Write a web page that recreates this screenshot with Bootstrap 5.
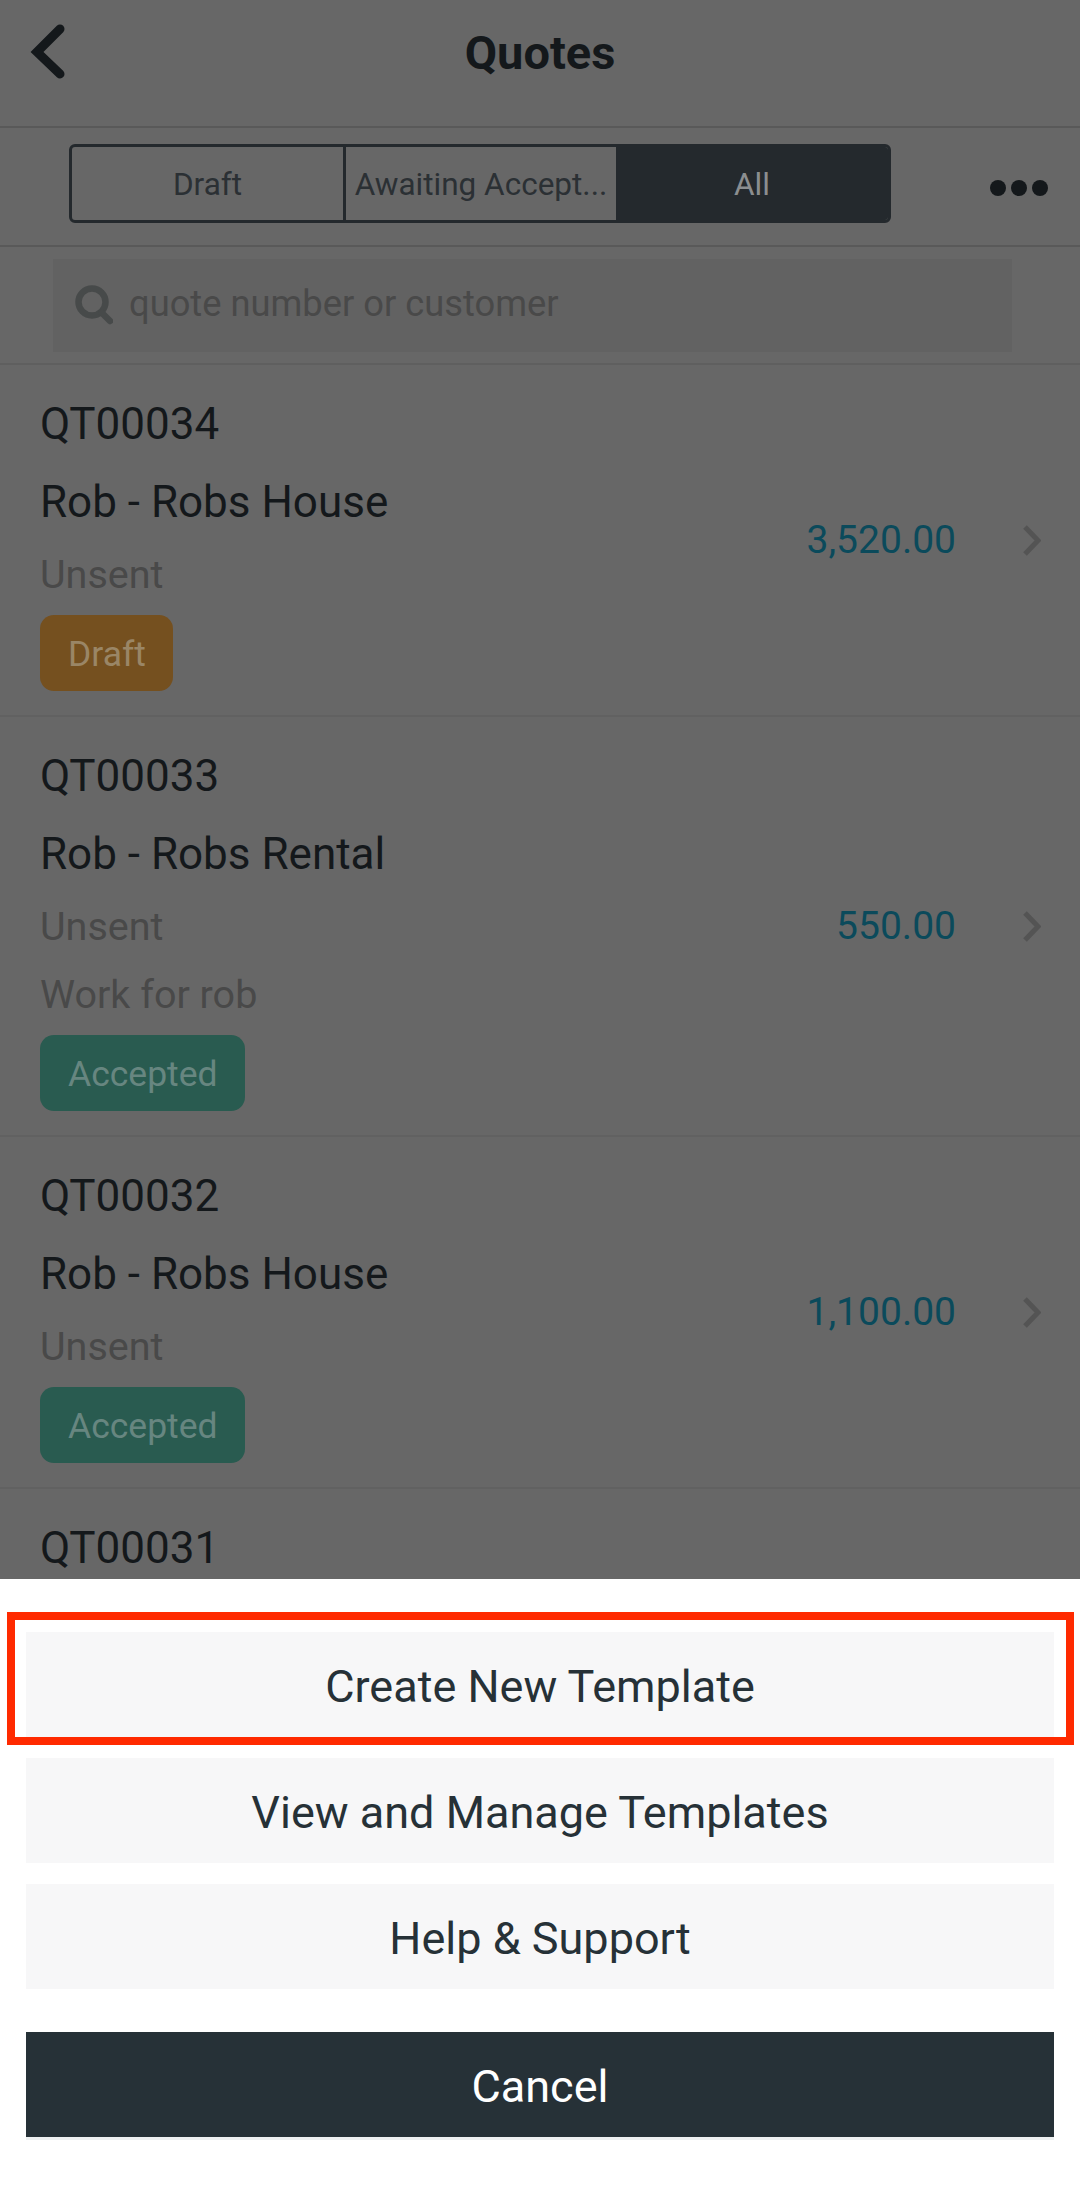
<!DOCTYPE html>
<html lang="en">
<head>
    <meta charset="UTF-8">
    <meta name="viewport" content="width=device-width, initial-scale=1.0">
    <title>Quotes</title>
    <link href="https://cdn.jsdelivr.net/npm/bootstrap@5.3.0/dist/css/bootstrap.min.css" rel="stylesheet">
    <style>
        html, body { height: 2188px; overflow: hidden; }
        body { width: 1080px; background: #676767; font-family: Roboto, "Liberation Sans", sans-serif; color: #14181b; }
        .app-page { height: 1579px; overflow: hidden; }
        .top-bar { height: 128px; padding-bottom: 22px; border-bottom: 2px solid #595959; position: relative; }
        .top-title { font-size: 47px; font-weight: 700; line-height: 1; }
        .back-link { position: absolute; left: 30px; top: 24px; line-height: 0; }
        .seg-row { height: 119px; padding: 16px 0 0 69px; border-bottom: 2px solid #595959; position: relative; }
        .seg-group { width: 822px; height: 79px; border: 3px solid #24292d; border-radius: 6px; overflow: hidden; }
        .seg-item { flex: 0 0 271px; padding-top: 2px; font-size: 31.5px; color: #2b3034; white-space: nowrap; overflow: hidden; }
        .seg-item + .seg-item { flex-basis: 273px; border-left: 3px solid #24292d; }
        .seg-item.seg-on { flex-basis: 272px; border-left: 0; background: #24292d; color: #8b8e90; }
        .more-dots { position: absolute; left: 990px; top: 51px; line-height: 0; }
        .search-row { height: 118px; padding: 12px 68px 0 53px; border-bottom: 2px solid #5f5f5f; }
        .search-box { height: 93px; background: #626262; padding: 0 0 2px 22px; font-size: 36.3px; color: #494949; }
        .quote-row { padding: 0 39px 0 40px; border-bottom: 2px solid #616161; }
        .quote-row:last-child { border-bottom: 0; }
        .quote-info { padding: 37px 0 24px; }
        .quote-num, .quote-name { font-size: 44px; line-height: 44px; color: #14181b; }
        .quote-name { margin-top: 34px; }
        .quote-state { font-size: 39.5px; line-height: 40px; color: #494949; margin-top: 31px; }
        .quote-state + .quote-state { margin-top: 28px; }
        .quote-tag { display: inline-block; font-size: 35.5px; line-height: 79px; height: 76px; padding: 0 27px 0 28px; border-radius: 14px; margin-top: 20px; vertical-align: top; }
        .tag-draft { background: #75501f; color: #9a8666; }
        .tag-accepted { background: #295b50; color: #678680; }
        .quote-amount { font-size: 39px; color: #0b4a5b; margin-right: 66px; }
        .sheet-panel { position: absolute; left: 0; top: 1579px; width: 1080px; height: 609px; background: #fff; padding: 53px 26px 0; }
        .sheet-btn { display: block; width: 100%; height: 105px; padding-top: 10px; border: 0; border-radius: 0; background: #f7f7f8; color: #263137; font-size: 45px; margin-bottom: 21px; }
        .sheet-btn:last-child { background: #263137; color: #fff; margin: 43px 0 0; box-shadow: 0 3px 0 #eef1f2; }
        .red-mark { position: absolute; left: 7px; top: 1612px; width: 1067px; height: 133px; border: 8px solid #ff2a00; }
    </style>
</head>
<body>
    <div class="app-page">
        <div class="top-bar d-flex align-items-center justify-content-center">
            <a class="back-link" href="#">
                <svg width="38" height="58" viewBox="0 0 38 58"><path d="M30 5 L7 28 L30 50" fill="none" stroke="#14181b" stroke-width="9" stroke-linecap="round" stroke-linejoin="miter"/></svg>
            </a>
            <div class="top-title">Quotes</div>
        </div>
        <div class="seg-row d-flex align-items-start">
            <div class="seg-group d-flex">
                <div class="seg-item d-flex align-items-center justify-content-center">Draft</div>
                <div class="seg-item d-flex align-items-center justify-content-center">Awaiting Accept...</div>
                <div class="seg-item seg-on d-flex align-items-center justify-content-center">All</div>
            </div>
            <div class="more-dots">
                <svg width="58" height="18" viewBox="0 0 58 18"><circle cx="8" cy="9" r="8" fill="#14181b"/><circle cx="29" cy="9" r="8" fill="#14181b"/><circle cx="50" cy="9" r="8" fill="#14181b"/></svg>
            </div>
        </div>
        <div class="search-row">
            <div class="search-box d-flex align-items-center gap-3">
                <svg width="38" height="40" viewBox="0 0 38 40"><circle cx="17" cy="17" r="13.5" fill="none" stroke="#474a4a" stroke-width="6.5"/><path d="M27 28 L35 36" stroke="#474a4a" stroke-width="6.5" stroke-linecap="round"/></svg>
                <span>quote number or customer</span>
            </div>
        </div>
        <div id="quotes"></div>
    </div>
    <div class="sheet-panel">
        <button class="btn sheet-btn">Create New Template</button>
        <button class="btn sheet-btn">View and Manage Templates</button>
        <button class="btn sheet-btn">Help &amp; Support</button>
        <button class="btn sheet-btn">Cancel</button>
    </div>
    <div class="red-mark"></div>

    <script src="https://cdn.jsdelivr.net/npm/bootstrap@5.3.0/dist/js/bootstrap.bundle.min.js"></script>
    <script>
        const quotes = [
            { num: 'QT00034', name: 'Rob - Robs House', lines: ['Unsent'], tag: 'Draft', amount: '3,520.00' },
            { num: 'QT00033', name: 'Rob - Robs Rental', lines: ['Unsent', 'Work for rob'], tag: 'Accepted', amount: '550.00' },
            { num: 'QT00032', name: 'Rob - Robs House', lines: ['Unsent'], tag: 'Accepted', amount: '1,100.00' },
            { num: 'QT00031', name: '', lines: [], tag: '', amount: '' }
        ];
        document.getElementById('quotes').innerHTML = quotes.map(q => `
            <div class="quote-row d-flex align-items-center">
                <div class="quote-info flex-grow-1">
                    <div class="quote-num">${q.num}</div>
                    ${q.name ? `<div class="quote-name">${q.name}</div>` : ''}
                    ${q.lines.map(l => `<div class="quote-state">${l}</div>`).join('')}
                    ${q.tag ? `<div class="quote-tag ${q.tag === 'Draft' ? 'tag-draft' : 'tag-accepted'}">${q.tag}</div>` : ''}
                </div>
                ${q.amount ? `<div class="quote-amount">${q.amount}</div>
                <svg width="19" height="31" viewBox="0 0 19 31"><path d="M3 2 L16 15.5 L3 29" fill="none" stroke="#545454" stroke-width="5"/></svg>` : ''}
            </div>
        `).join('');
    </script>
</body>
</html>
